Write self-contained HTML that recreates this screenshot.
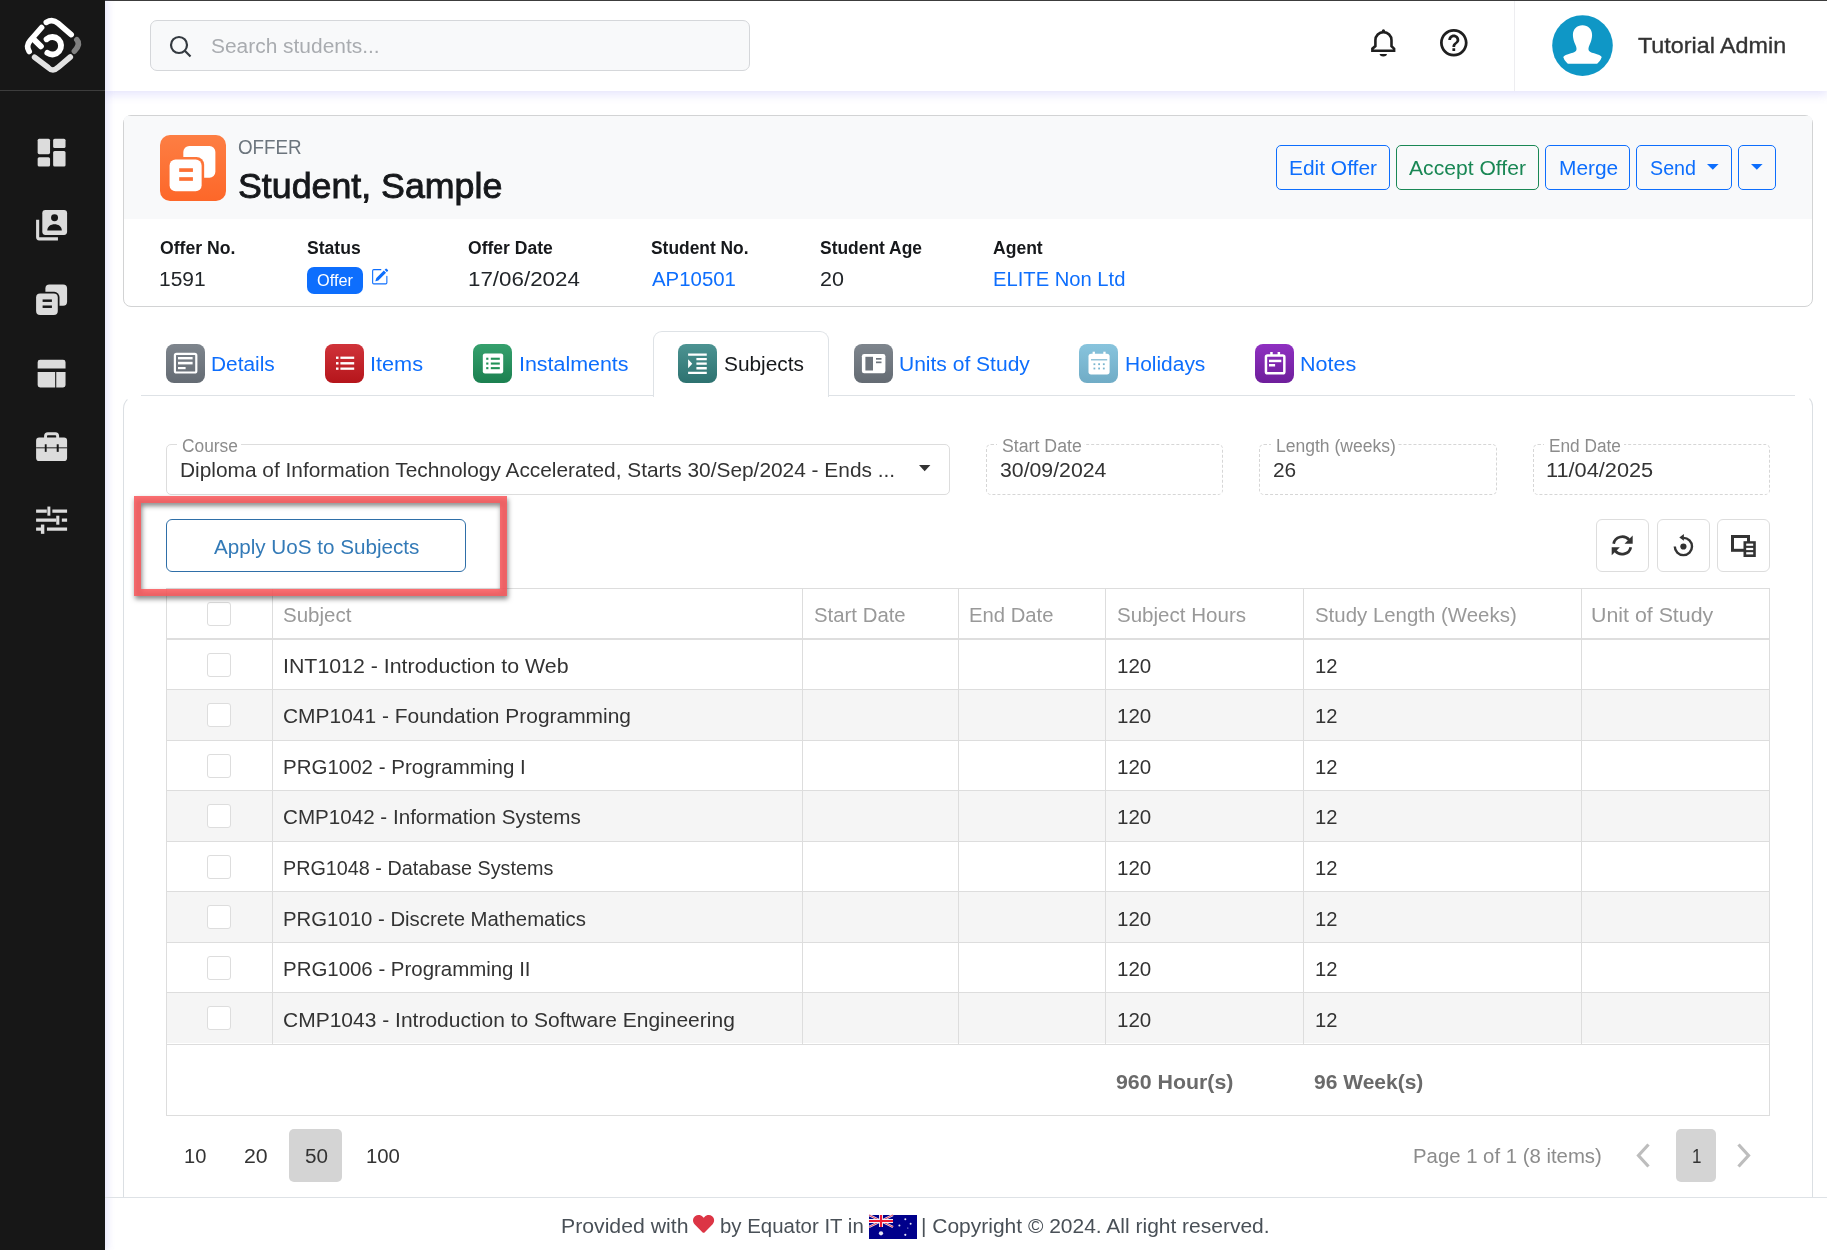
<!DOCTYPE html>
<html lang="en">
<head>
<meta charset="utf-8">
<title>Offer - Student, Sample</title>
<style>
*{box-sizing:border-box;margin:0;padding:0}
html,body{width:1827px;height:1250px;overflow:hidden;background:#fff}
body{font-family:"Liberation Sans",sans-serif;color:#212529;position:relative}
.abs{position:absolute}
svg{position:absolute;overflow:visible}
.t{position:absolute;white-space:nowrap;line-height:1;transform-origin:0 50%}
#side{position:absolute;left:0;top:0;width:105px;height:1250px;background:#171717;box-shadow:2px 0 7px 1px rgba(115,105,235,.16)}
#sdiv{position:absolute;left:0;top:90px;width:105px;height:1px;background:#3d3d3d}
#top{position:absolute;left:105px;top:0;width:1722px;height:91px;background:#fff;box-shadow:0 3px 9px 1px rgba(115,105,235,.17)}
#topline{position:absolute;left:0;top:0;width:1827px;height:1px;background:#3c3c3c}
#search{position:absolute;left:150px;top:20px;width:600px;height:51px;border:1px solid #d5d7da;border-radius:7px;background:#f8f9fa}
#vdiv{position:absolute;left:1514px;top:1px;width:1px;height:90px;background:#ededf0}
#card{position:absolute;left:123px;top:115px;width:1690px;height:192px;border:1px solid #d2d3d4;border-radius:8px;background:#fff}
#cardhd{position:absolute;left:0;top:0;width:100%;height:103px;background:#f8f9fa;border-radius:4px 4px 0 0}
#oicon{position:absolute;left:160px;top:135px;width:66px;height:66px;border-radius:10px;background:linear-gradient(#fd7e43,#fd6729)}
.btn{position:absolute;top:145px;height:45px;border:1px solid #0d6efd;border-radius:5px}
.btn.g{border-color:#198754}
#badge{position:absolute;left:307px;top:267px;width:56px;height:27px;border-radius:7px;background:#0d6efd}
.tabi{position:absolute;top:344px;width:39px;height:39px;border-radius:8px}
#tabline{position:absolute;left:141px;top:395px;width:1654px;height:1px;background:#dee2e6}
#tabact{position:absolute;left:653px;top:331px;width:176px;height:66px;border:1px solid #dee2e6;border-bottom:none;border-radius:9px 9px 0 0;background:#fff}
#panel{position:absolute;left:123px;top:395px;width:1690px;height:803px;border:1px solid #dbdfe3;border-top-color:transparent;border-bottom:none;border-radius:14px 11px 0 0}
.fld{position:absolute;top:444px;height:51px;border:1px solid #ddd;border-radius:5px;background:#fff}
.fld.ro{border-style:dashed;border-color:#d6d6d6}
.fl{font-size:17px;color:#8c8c8c;background:#fff;padding:0 5px;height:16px;line-height:16px}
#grid{position:absolute;left:166px;top:588px;width:1604px;height:528px;border:1px solid #ddd;background:#fff}
.hl{left:167px;width:1602px;height:1px;background:#ddd}
.vl{position:absolute;top:589px;width:1px;height:455px;background:#ddd}
.cb{position:absolute;left:207px;width:24px;height:24px;border:1px solid #ddd;border-radius:3px;background:#fff}
.tb{position:absolute;top:519px;width:53px;height:53px;border:1px solid #ddd;border-radius:6px;background:#fff}
#anno{position:absolute;left:134px;top:496px;width:373px;height:100px;border:7px solid rgba(250,88,92,.86);filter:drop-shadow(1px 3px 2.5px rgba(0,0,0,.55))}
</style>
</head>
<body>
<div id="top"></div>
<div id="topline"></div>
<div id="side"><div id="sdiv"></div>
<svg style="left:0px;top:0px" width="105" height="90" viewBox="0 0 105 90" ><g fill="none" stroke-linecap="round" stroke-linejoin="round" stroke-width="5.6"><path d="M46.3 22.4 Q52.5 18.4 58.2 23.4 L71.2 34.6" stroke="#fff"/><path d="M41.6 27.5 L30.2 40.5 Q25.6 46 29.2 51.5" stroke="#fff"/><path d="M33.7 39.4 L40.9 46.3" stroke="#fff" stroke-width="5.9"/><path d="M46.6 39.2 A8.7 8.7 0 1 1 47.4 52.9" stroke="#fff" stroke-width="5.9"/><path d="M34.6 57.3 L48.2 67.6 Q52.9 72.4 57.8 67.6 L70.3 57" stroke="#e2e2e2"/><path d="M76.8 39.7 Q81 44.2 74.4 51.2" stroke="#808080"/></g></svg>
<svg style="left:33.2px;top:133.5px" width="37.2" height="37.2" viewBox="0 0 24 24" ><g fill="#dcdcdc"><rect x="3" y="3" width="8" height="10" rx="1"/><rect x="3" y="15" width="8" height="6" rx="1"/><rect x="13" y="3" width="8" height="6" rx="1"/><rect x="13" y="11" width="8" height="10" rx="1"/></g></svg>
<svg style="left:33.2px;top:207.0px" width="37.2" height="37.2" viewBox="0 0 24 24" ><defs><mask id="mk0"><rect x="0" y="0" width="24" height="24" fill="#fff"/><circle cx="13.9" cy="6.9" r="2.25" fill="#000"/><path d="M9.2 15.1c0-2.700 2.400-4 4.700-4s4.700 1.300 4.700 4z" fill="#000"/></mask></defs><rect x="6" y="2" width="16" height="16" rx="2" fill="#dcdcdc" mask="url(#mk0)"/><path fill="#dcdcdc" d="M2 8.200h2v11.400h12.100v2H4a2 2 0 0 1-2-2z"/></svg>
<svg style="left:33.2px;top:280.5px" width="37.2" height="37.2" viewBox="0 0 24 24" ><defs><mask id="mk1"><rect x="0" y="0" width="24" height="24" fill="#fff"/><rect x="0.9" y="7" width="16.2" height="16" rx="3.4" fill="#000"/></mask></defs><rect x="8" y="2.2" width="14" height="13.8" rx="2.6" fill="#dcdcdc" mask="url(#mk1)"/><rect x="2" y="8.1" width="14" height="13.8" rx="2.6" fill="#dcdcdc"/><rect x="6.2" y="11.9" width="6" height="1.6" fill="#171717"/><rect x="6.2" y="15.8" width="6" height="1.6" fill="#171717"/></svg>
<svg style="left:33.2px;top:354.6px" width="37.2" height="37.2" viewBox="0 0 24 24" ><g fill="#dcdcdc"><path d="M4.6 3h14.8A1.6 1.6 0 0 1 21 4.6V8.7H3V4.6A1.6 1.6 0 0 1 4.6 3z"/><path d="M3 11h11.3v10H4.6A1.6 1.6 0 0 1 3 19.4z"/><path d="M15 11h6v8.4a1.6 1.6 0 0 1-1.6 1.6H15z"/></g></svg>
<svg style="left:33.2px;top:427.7px" width="37.2" height="37.2" viewBox="0 0 24 24" ><defs><mask id="mk3"><rect x="0" y="0" width="24" height="24" fill="#fff"/><rect x="2" y="12.500" width="20" height="0.600" fill="#000"/><rect x="7.600" y="10.500" width="1.200" height="4.900" fill="#000"/><rect x="15.300" y="10.500" width="1.300" height="4.900" fill="#000"/></mask></defs><path fill="none" stroke="#dcdcdc" stroke-width="1.900" d="M8.100 7V5.200a1.500 1.500 0 0 1 1.500-1.500h4.800a1.500 1.500 0 0 1 1.500 1.500V7"/><rect x="2" y="6.200" width="20" height="15.100" rx="2" fill="#dcdcdc" mask="url(#mk3)"/></svg>
<svg style="left:33.2px;top:502.8px" width="37.2" height="37.2" viewBox="0 0 24 24" ><g fill="#dcdcdc"><rect x="2" y="4.2" width="6.9" height="2.1"/><rect x="9.3" y="2.3" width="1.9" height="5.9"/><rect x="12.5" y="4.2" width="9.5" height="2.1"/><rect x="2" y="10" width="13" height="2.1"/><rect x="15" y="8.2" width="2" height="5.8"/><rect x="18.6" y="10" width="3.4" height="2.1"/><rect x="2" y="15.8" width="3.2" height="2.1"/><rect x="5.1" y="13.9" width="2.2" height="6"/><rect x="9" y="15.8" width="13" height="2.1"/></g></svg>
</div>
<div id="search"></div>
<svg style="left:168px;top:34px" width="26" height="26" viewBox="0 0 26 26" ><g fill="none" stroke="#343a40" stroke-width="2.2" stroke-linecap="butt"><circle cx="11" cy="11" r="8"/><path d="M16.8 16.8 L22.5 22.5"/></g></svg>
<svg style="left:1370.8px;top:28.7px" width="24.8" height="27.4" viewBox="0 0 24.8 27.4" ><path fill="none" stroke="#1f1f1f" stroke-width="2.600" stroke-linejoin="miter" d="M4.400 11.200A8.050 8.050 0 0 1 20.500 11.200V17.100L23.100 19.700V21.800H1.400V19.700L4.400 17.100z"/><circle cx="12.450" cy="1.800" r="1.600" fill="#1f1f1f"/><path fill="#1f1f1f" d="M8.650 25.100h7.300a3.650 2.400 0 0 1-7.300 0z"/></svg>
<svg style="left:1440.3px;top:28.6px" width="27.6" height="27.6" viewBox="2 2 20 20" ><path fill="#1f1f1f" d="M11 18h2v-2h-2v2zm1-16C6.48 2 2 6.48 2 12s4.48 10 10 10 10-4.48 10-10S17.52 2 12 2zm0 18c-4.41 0-8-3.59-8-8s3.59-8 8-8 8 3.59 8 8-3.59 8-8 8zm0-14c-2.21 0-4 1.79-4 4h2c0-1.1.9-2 2-2s2 .9 2 2c0 2-3 1.75-3 5h2c0-2.25 3-2.5 3-5 0-2.21-1.79-4-4-4z"/></svg>
<svg style="left:1552px;top:15px" width="61" height="61" viewBox="0 0 61 61" ><circle cx="30.5" cy="30.6" r="30.3" fill="#0f97c6"/><path fill="#fff" d="M30.5 10.3C36.1 10.3 40.1 14.3 40.1 19.9C40.1 23.4 38.9 26.9 37.5 29.9C36.6 31.9 36.1 34.0 36.8 35.4C37.4 36.6 38.9 37.4 42.1 38.3C46.3 39.5 49.0 40.6 49.7 42.1C49.7 42.1 49.1 44.4 47.7 46.1C46.5 47.5 45.1 48.8 45.1 48.8H15.9C15.9 48.8 14.5 47.5 13.3 46.1C11.9 44.4 11.3 42.1 11.3 42.1C12.0 40.6 14.7 39.5 18.9 38.3C22.1 37.4 23.6 36.6 24.2 35.4C24.9 34.0 24.4 31.9 23.5 29.9C22.1 26.9 20.9 23.4 20.9 19.9C20.9 14.3 24.9 10.3 30.5 10.3z"/></svg>
<div id="vdiv"></div>

<div id="card"><div id="cardhd"></div></div>
<div id="oicon"></div>
<svg style="left:165.42px;top:140.56px" width="54.96" height="54.96" viewBox="0 0 24 24" ><defs><mask id="mk2"><rect x="0" y="0" width="24" height="24" fill="#fff"/><rect x="0.9" y="7" width="16.2" height="16" rx="3.4" fill="#000"/></mask></defs><rect x="8" y="2.2" width="14" height="13.8" rx="2.6" fill="#fff" mask="url(#mk2)"/><rect x="2" y="8.1" width="14" height="13.8" rx="2.6" fill="#fff"/><rect x="6.2" y="11.9" width="6" height="1.6" fill="#fd7034"/><rect x="6.2" y="15.8" width="6" height="1.6" fill="#fd7034"/></svg><svg style="left:1707px;top:164.2px" width="11.6" height="5.8" viewBox="0 0 10 5" ><path fill="#0d6efd" d="M0 0h10L5 5z"/></svg><svg style="left:1751.1px;top:164.2px" width="11.6" height="5.8" viewBox="0 0 10 5" ><path fill="#0d6efd" d="M0 0h10L5 5z"/></svg><svg style="left:371px;top:267.5px" width="17.5" height="17.5" viewBox="0 0 16 16" ><g fill="#0d6efd"><path d="M15.502 1.94a.5.5 0 0 1 0 .706L14.459 3.69l-2-2L13.502.646a.5.5 0 0 1 .707 0l1.293 1.293zm-1.75 2.456-2-2L4.939 9.21a.5.5 0 0 0-.121.196l-.805 2.414a.25.25 0 0 0 .316.316l2.414-.805a.5.5 0 0 0 .196-.12l6.813-6.814z"/><path fill-rule="evenodd" d="M1 13.500A1.500 1.500 0 0 0 2.500 15h11a1.500 1.500 0 0 0 1.500-1.500v-6a.5.5 0 0 0-1 0v6a.5.5 0 0 1-.5.5h-11a.5.5 0 0 1-.5-.5v-11a.5.5 0 0 1 .5-.5H9a.5.5 0 0 0 0-1H2.500A1.500 1.500 0 0 0 1 2.500z"/></g></svg>
<div class="btn" style="left:1276px;width:114px"></div>
<div class="btn g" style="left:1396px;width:143px"></div>
<div class="btn" style="left:1545px;width:85px"></div>
<div class="btn" style="left:1636px;width:96px"></div>
<div class="btn" style="left:1738px;width:38px"></div>
<div id="badge"></div>

<div id="panel"></div>
<div id="tabline"></div>
<div id="tabact"></div>
<div class="tabi" style="left:166px;background:linear-gradient(#7e858d,#646b73)"></div>
<div class="tabi" style="left:325px;background:linear-gradient(#d0333a,#b5151b)"></div>
<div class="tabi" style="left:473px;background:linear-gradient(#35a06d,#1b8050)"></div>
<div class="tabi" style="left:678px;background:linear-gradient(#4c9392,#2d7270)"></div>
<div class="tabi" style="left:854px;background:linear-gradient(#7e858d,#646b73)"></div>
<div class="tabi" style="left:1079px;background:linear-gradient(#88c4dd,#70acc6)"></div>
<div class="tabi" style="left:1255px;background:linear-gradient(#8f30c1,#6e1e9b)"></div>
<svg style="left:166px;top:344px" width="39" height="39" viewBox="0 0 39 39" ><rect x="8.9" y="9.9" width="21.4" height="18.6" rx="1.6" fill="none" stroke="#fff" stroke-width="2.2"/><g fill="#fff"><rect x="12" y="13" width="14.6" height="2.4"/><rect x="12" y="17.8" width="14.6" height="2.6"/><rect x="12" y="23" width="7.6" height="2.2"/></g></svg>
<svg style="left:325px;top:344px" width="39" height="39" viewBox="0 0 39 39" ><g fill="#fff"><rect x="11" y="12.6" width="2.5" height="2.3"/><rect x="15.4" y="12.6" width="13.8" height="2.3"/><rect x="11" y="18.1" width="2.5" height="2.4"/><rect x="15.4" y="18.1" width="13.8" height="2.4"/><rect x="11" y="23.5" width="2.500" height="2.3"/><rect x="15.400" y="23.500" width="13.800" height="2.300"/></g></svg>
<svg style="left:473px;top:344px" width="39" height="39" viewBox="0 0 39 39" ><rect x="9.800" y="9.400" width="20.400" height="20.100" rx="2.200" fill="#fff"/><g fill="#229257"><rect x="13.200" y="13.700" width="2.200" height="2.100"/><rect x="17.800" y="13.700" width="9" height="2.100"/><rect x="13.200" y="18.500" width="2.200" height="2.100"/><rect x="17.800" y="18.500" width="9" height="2.100"/><rect x="13.200" y="23.100" width="2.200" height="2.100"/><rect x="17.800" y="23.100" width="9" height="2.100"/></g></svg>
<svg style="left:685.3px;top:350.3px" width="24.9" height="27.4" viewBox="0 0 24 24" preserveAspectRatio="none"><path fill="#fff" d="M3 21h18v-2H3v2zM3 8v8l4-4-4-4zm8 9h10v-2H11v2zM3 3v2h18V3H3zm8 6h10V7H11v2zm0 4h10v-2H11v2z"/></svg>
<svg style="left:854px;top:344px" width="39" height="39" viewBox="0 0 39 39" ><rect x="7.900" y="10" width="23.500" height="19.300" rx="2.200" fill="#fff"/><g fill="#6d747c"><rect x="11.400" y="12.800" width="7.600" height="13.700"/><rect x="22" y="14" width="5.500" height="1.700"/><rect x="22" y="17.500" width="5.500" height="1.700"/></g></svg>
<svg style="left:1079px;top:344px" width="39" height="39" viewBox="0 0 39 39" ><g fill="#fff"><rect x="9.500" y="9.700" width="21.100" height="20.700" rx="2.600"/><rect x="13.600" y="7.700" width="2.300" height="4"/><rect x="24.300" y="7.700" width="2.300" height="4"/></g><g fill="#79b5cf"><rect x="12" y="15.200" width="16.200" height="1.200"/><rect x="14.500" y="19.300" width="1.800" height="1.800"/><rect x="19.200" y="19.300" width="1.800" height="1.800"/><rect x="23.900" y="19.300" width="1.800" height="1.800"/><rect x="14.500" y="23.600" width="1.800" height="1.800"/><rect x="19.200" y="23.600" width="1.800" height="1.800"/><rect x="23.900" y="23.600" width="1.800" height="1.800"/></g></svg>
<svg style="left:1255px;top:344px" width="39" height="39" viewBox="0 0 39 39" ><rect x="10.950" y="11.450" width="18.400" height="17.800" rx="1.600" fill="none" stroke="#fff" stroke-width="2.500"/><g fill="#fff"><rect x="15.200" y="8" width="2.500" height="3"/><rect x="22.600" y="8" width="2.500" height="3"/><rect x="14" y="15.700" width="12.300" height="2.500"/><rect x="14" y="20" width="6.100" height="2.500"/></g></svg>

<div class="fld" style="left:166px;width:784px"></div>
<div class="fld ro" style="left:986px;width:237px"></div>
<div class="fld ro" style="left:1259px;width:238px"></div>
<div class="fld ro" style="left:1533px;width:237px"></div>
<div class="abs" style="left:177.0px;top:439px;width:64.0px;height:8px;background:#fff"></div>
<div class="t" style="left:182.0px;top:436.8px;font-size:18px;color:#8c8c8c;transform:scaleX(0.9643)">Course</div>
<div class="abs" style="left:996.6px;top:439px;width:87.8px;height:8px;background:#fff"></div>
<div class="t" style="left:1001.6px;top:436.8px;font-size:18px;color:#8c8c8c;transform:scaleX(0.9848)">Start Date</div>
<div class="abs" style="left:1270.5px;top:439px;width:127.8px;height:8px;background:#fff"></div>
<div class="t" style="left:1275.5px;top:436.8px;font-size:18px;color:#8c8c8c;transform:scaleX(0.9736)">Length (weeks)</div>
<div class="abs" style="left:1544.0px;top:439px;width:80.0px;height:8px;background:#fff"></div>
<div class="t" style="left:1549.0px;top:436.8px;font-size:18px;color:#8c8c8c;transform:scaleX(0.9589)">End Date</div>

<div class="abs" style="left:166px;top:519px;width:300px;height:53px;border:1px solid #2f6fa8;border-radius:6px;background:#fff"></div>
<div class="tb" style="left:1596px"></div>
<div class="tb" style="left:1657px"></div>
<div class="tb" style="left:1717px"></div>
<svg style="left:1611.3px;top:534.6px" width="22.4" height="20.8" viewBox="0 0 22 20" ><g fill="none" stroke="#333" stroke-width="2.700"><path d="M2.600 8.300A8.600 8.300 0 0 1 17.800 4.600"/><path d="M19.400 11.700A8.600 8.300 0 0 1 4.200 15.400"/></g><g fill="#333"><path d="M21.300 0.300V8.300H13.300z"/><path d="M0.700 19.700V11.700H8.700z"/></g></svg>
<svg style="left:1672.5px;top:534px" width="21" height="22.5" viewBox="0 0 21 22.500" ><path fill="none" stroke="#333" stroke-width="2.400" d="M10.400 3.900A8.600 8.600 0 1 1 1.800 12.500"/><path fill="#333" d="M10.900 0V6.800L6.300 3.400z"/><circle cx="10.400" cy="12.500" r="3.100" fill="#333"/></svg>
<svg style="left:1731px;top:534.6px" width="25.5" height="22.8" viewBox="0 0 25.500 22.800" ><rect x="1.500" y="1.500" width="16" height="13.800" fill="none" stroke="#333" stroke-width="3"/><rect x="12.500" y="6.200" width="12.300" height="15.800" fill="#333"/><g fill="#fff"><rect x="15.200" y="8.600" width="7" height="2.200"/><rect x="15.200" y="12.900" width="7" height="2.200"/><rect x="15.200" y="17.200" width="7" height="2.200"/></g></svg><svg style="left:918.9px;top:465.4px" width="11.4" height="6.2" viewBox="0 0 10 5" preserveAspectRatio="none"><path fill="#333" d="M0 0h10L5 5z"/></svg>

<div id="grid"></div>
<div class="cb" style="top:602px"></div>
<div class="abs hl" style="top:638px;height:2px;background:#dedede"></div>
<div class="abs hl" style="top:689px"></div>
<div class="cb" style="top:653px"></div>
<div class="abs" style="left:167px;top:690px;width:1602px;height:50px;background:#f5f5f5"></div>
<div class="abs hl" style="top:740px"></div>
<div class="cb" style="top:703px"></div>
<div class="abs hl" style="top:790px"></div>
<div class="cb" style="top:754px"></div>
<div class="abs" style="left:167px;top:791px;width:1602px;height:50px;background:#f5f5f5"></div>
<div class="abs hl" style="top:841px"></div>
<div class="cb" style="top:804px"></div>
<div class="abs hl" style="top:891px"></div>
<div class="cb" style="top:855px"></div>
<div class="abs" style="left:167px;top:892px;width:1602px;height:50px;background:#f5f5f5"></div>
<div class="abs hl" style="top:942px"></div>
<div class="cb" style="top:905px"></div>
<div class="abs hl" style="top:992px"></div>
<div class="cb" style="top:956px"></div>
<div class="abs" style="left:167px;top:993px;width:1602px;height:50px;background:#f5f5f5"></div>
<div class="abs hl" style="top:1044px"></div>
<div class="cb" style="top:1006px"></div>
<div class="vl" style="left:272px"></div>
<div class="vl" style="left:802px"></div>
<div class="vl" style="left:958px"></div>
<div class="vl" style="left:1105px"></div>
<div class="vl" style="left:1303px"></div>
<div class="vl" style="left:1581px"></div>

<div class="abs" style="left:289px;top:1129px;width:53px;height:53px;border-radius:5px;background:#d4d4d4"></div>
<div class="abs" style="left:1676px;top:1129px;width:40px;height:53px;border-radius:5px;background:#d4d4d4"></div>
<svg style="left:1636px;top:1143px" width="14" height="25" viewBox="0 0 14 25" ><path fill="none" stroke="#bdbdbd" stroke-width="3.2" d="M12.500 1.500L2.500 12.500L12.500 23.500"/></svg><svg style="left:1737px;top:1143px" width="14" height="25" viewBox="0 0 14 25" ><path fill="none" stroke="#bdbdbd" stroke-width="3.2" d="M1.500 1.500L11.500 12.500L1.500 23.500"/></svg>
<div class="abs" style="left:105px;top:1197px;width:1722px;height:1px;background:#dee2e6"></div>
<svg style="left:693.3px;top:1215.3px" width="21.4" height="19.9" viewBox="0 0 512 480" preserveAspectRatio="none"><path fill="#dc3545" d="M47.600 32.500c-61.900 52.700-58.600 138.800-10.600 188.300l193.500 199.800c12.500 12.900 33.400 12.900 45.900 0l193.500-199.800c48-49.500 51.300-135.600-10.600-188.300-54-46-134.400-37.700-183.900 13.400L256 66.200l-19.400-20.300C187.100-5.200 106.600-13.500 47.600 32.500z"/></svg><svg style="left:868.8px;top:1214.7px" width="48" height="24" viewBox="0 0 48 24" ><rect width="48" height="24" fill="#00008b"/><g stroke="#e9e9f6" stroke-width="2.400"><path d="M0 0L24 12M24 0L0 12"/></g><g stroke="#e0263c" stroke-width="0.900"><path d="M0 0L24 12M24 0L0 12"/></g><path d="M12 0V12M0 6H24" stroke="#f4f4fb" stroke-width="4"/><path d="M12 0V12M0 6H24" stroke="#ee1c34" stroke-width="2.200"/><g fill="#e4e4f5"><circle cx="12" cy="18.300" r="2.100"/><circle cx="36.300" cy="4.300" r="1"/><circle cx="30.400" cy="10.600" r="1"/><circle cx="41.600" cy="8.800" r="1"/><circle cx="36.300" cy="19.800" r="1.100"/><circle cx="38.800" cy="13" r="0.600"/></g></svg>

<div class="t" style="left:210.7px;top:36.1px;font-size:20px;color:#a9acb0;transform:scaleX(1.0459);">Search students...</div>
<div class="t" style="left:1637.5px;top:34.8px;font-size:22.5px;color:#333;transform:scaleX(1.0359);-webkit-text-stroke:0.35px #333;">Tutorial Admin</div>
<div class="t" style="left:237.6px;top:136.9px;font-size:20px;color:#6c757d;transform:scaleX(0.9394);">OFFER</div>
<div class="t" style="left:237.5px;top:168.0px;font-size:35px;color:#16181b;transform:scaleX(1.0214);-webkit-text-stroke:0.9px #16181b;">Student, Sample</div>
<div class="t" style="left:159.6px;top:240.4px;font-size:17.5px;color:#16181b;transform:scaleX(1.0082);font-weight:bold;">Offer No.</div>
<div class="t" style="left:306.8px;top:240.4px;font-size:17.5px;color:#16181b;transform:scaleX(1.0038);font-weight:bold;">Status</div>
<div class="t" style="left:467.8px;top:240.4px;font-size:17.5px;color:#16181b;transform:scaleX(1.0024);font-weight:bold;">Offer Date</div>
<div class="t" style="left:650.6px;top:240.4px;font-size:17.5px;color:#16181b;transform:scaleX(0.9937);font-weight:bold;">Student No.</div>
<div class="t" style="left:819.7px;top:240.4px;font-size:17.5px;color:#16181b;transform:scaleX(0.9960);font-weight:bold;">Student Age</div>
<div class="t" style="left:992.9px;top:240.4px;font-size:17.5px;color:#16181b;transform:scaleX(1.0021);font-weight:bold;">Agent</div>
<div class="t" style="left:159.3px;top:269.1px;font-size:20px;color:#212529;transform:scaleX(1.0476);">1591</div>
<div class="t" style="left:467.8px;top:269.1px;font-size:20px;color:#212529;transform:scaleX(1.1173);">17/06/2024</div>
<div class="t" style="left:651.8px;top:269.1px;font-size:20px;color:#0d6efd;transform:scaleX(1.0195);">AP10501</div>
<div class="t" style="left:819.8px;top:269.1px;font-size:20px;color:#212529;transform:scaleX(1.0750);">20</div>
<div class="t" style="left:993.0px;top:269.1px;font-size:20px;color:#0d6efd;transform:scaleX(1.0094);">ELITE Non Ltd</div>
<div class="t" style="left:317.0px;top:272.7px;font-size:16px;color:#fff;transform:scaleX(1.0176);">Offer</div>
<div class="t" style="left:1289.1px;top:158.1px;font-size:20px;color:#0d6efd;transform:scaleX(1.0463);">Edit Offer</div>
<div class="t" style="left:1409.3px;top:158.1px;font-size:20px;color:#198754;transform:scaleX(1.0559);">Accept Offer</div>
<div class="t" style="left:1558.5px;top:158.1px;font-size:20px;color:#0d6efd;transform:scaleX(1.0444);">Merge</div>
<div class="t" style="left:1649.7px;top:158.1px;font-size:20px;color:#0d6efd;transform:scaleX(0.9841);">Send</div>
<div class="t" style="left:211.3px;top:354.4px;font-size:20px;color:#0d6efd;transform:scaleX(1.0424);">Details</div>
<div class="t" style="left:370.2px;top:354.4px;font-size:20px;color:#0d6efd;transform:scaleX(1.0848);">Items</div>
<div class="t" style="left:518.8px;top:354.4px;font-size:20px;color:#0d6efd;transform:scaleX(1.0710);">Instalments</div>
<div class="t" style="left:724.0px;top:354.4px;font-size:20px;color:#16181b;transform:scaleX(1.0427);">Subjects</div>
<div class="t" style="left:899.3px;top:354.4px;font-size:20px;color:#0d6efd;transform:scaleX(1.0508);">Units of Study</div>
<div class="t" style="left:1125.2px;top:354.4px;font-size:20px;color:#0d6efd;transform:scaleX(1.0473);">Holidays</div>
<div class="t" style="left:1300.2px;top:354.4px;font-size:20px;color:#0d6efd;transform:scaleX(1.0760);">Notes</div>
<div class="t" style="left:180.1px;top:459.5px;font-size:20.7px;color:#333;transform:scaleX(1.0084);">Diploma of Information Technology Accelerated, Starts 30/Sep/2024 - Ends ...</div>
<div class="t" style="left:1000.0px;top:459.5px;font-size:20.7px;color:#333;transform:scaleX(1.0275);">30/09/2024</div>
<div class="t" style="left:1273.2px;top:459.5px;font-size:20.7px;color:#333;transform:scaleX(1.0095);">26</div>
<div class="t" style="left:1546.1px;top:459.5px;font-size:20.7px;color:#333;transform:scaleX(1.0505);">11/04/2025</div>
<div class="t" style="left:213.9px;top:537.8px;font-size:19.9px;color:#337ab7;transform:scaleX(1.0376);">Apply UoS to Subjects</div>
<div class="t" style="left:283.3px;top:605.8px;font-size:19.9px;color:#999;transform:scaleX(1.0308);">Subject</div>
<div class="t" style="left:813.5px;top:605.8px;font-size:19.9px;color:#999;transform:scaleX(1.0239);">Start Date</div>
<div class="t" style="left:969.4px;top:605.8px;font-size:19.9px;color:#999;transform:scaleX(1.0188);">End Date</div>
<div class="t" style="left:1117.3px;top:605.8px;font-size:19.9px;color:#999;transform:scaleX(1.0325);">Subject Hours</div>
<div class="t" style="left:1314.5px;top:605.8px;font-size:19.9px;color:#999;transform:scaleX(1.0268);">Study Length (Weeks)</div>
<div class="t" style="left:1591.4px;top:605.8px;font-size:19.9px;color:#999;transform:scaleX(1.0732);">Unit of Study</div>
<div class="t" style="left:283.3px;top:656.6px;font-size:19.9px;color:#333;transform:scaleX(1.0730);">INT1012 - Introduction to Web</div>
<div class="t" style="left:1117.2px;top:656.6px;font-size:19.9px;color:#333;transform:scaleX(1.0323);">120</div>
<div class="t" style="left:1315.0px;top:656.6px;font-size:19.9px;color:#333;transform:scaleX(1.0150);">12</div>
<div class="t" style="left:283.1px;top:707.2px;font-size:19.9px;color:#333;transform:scaleX(1.0527);">CMP1041 - Foundation Programming</div>
<div class="t" style="left:1117.2px;top:707.2px;font-size:19.9px;color:#333;transform:scaleX(1.0323);">120</div>
<div class="t" style="left:1315.0px;top:707.2px;font-size:19.9px;color:#333;transform:scaleX(1.0150);">12</div>
<div class="t" style="left:283.3px;top:757.8px;font-size:19.9px;color:#333;transform:scaleX(1.0306);">PRG1002 - Programming I</div>
<div class="t" style="left:1117.2px;top:757.8px;font-size:19.9px;color:#333;transform:scaleX(1.0323);">120</div>
<div class="t" style="left:1315.0px;top:757.8px;font-size:19.9px;color:#333;transform:scaleX(1.0150);">12</div>
<div class="t" style="left:283.2px;top:808.4px;font-size:19.9px;color:#333;transform:scaleX(1.0360);">CMP1042 - Information Systems</div>
<div class="t" style="left:1117.2px;top:808.4px;font-size:19.9px;color:#333;transform:scaleX(1.0323);">120</div>
<div class="t" style="left:1315.0px;top:808.4px;font-size:19.9px;color:#333;transform:scaleX(1.0150);">12</div>
<div class="t" style="left:283.4px;top:859.1px;font-size:19.9px;color:#333;transform:scaleX(0.9941);">PRG1048 - Database Systems</div>
<div class="t" style="left:1117.2px;top:859.1px;font-size:19.9px;color:#333;transform:scaleX(1.0323);">120</div>
<div class="t" style="left:1315.0px;top:859.1px;font-size:19.9px;color:#333;transform:scaleX(1.0150);">12</div>
<div class="t" style="left:283.4px;top:909.7px;font-size:19.9px;color:#333;transform:scaleX(1.0224);">PRG1010 - Discrete Mathematics</div>
<div class="t" style="left:1117.2px;top:909.7px;font-size:19.9px;color:#333;transform:scaleX(1.0323);">120</div>
<div class="t" style="left:1315.0px;top:909.7px;font-size:19.9px;color:#333;transform:scaleX(1.0150);">12</div>
<div class="t" style="left:283.3px;top:960.3px;font-size:19.9px;color:#333;transform:scaleX(1.0270);">PRG1006 - Programming II</div>
<div class="t" style="left:1117.2px;top:960.3px;font-size:19.9px;color:#333;transform:scaleX(1.0323);">120</div>
<div class="t" style="left:1315.0px;top:960.3px;font-size:19.9px;color:#333;transform:scaleX(1.0150);">12</div>
<div class="t" style="left:283.1px;top:1011.0px;font-size:19.9px;color:#333;transform:scaleX(1.0559);">CMP1043 - Introduction to Software Engineering</div>
<div class="t" style="left:1117.2px;top:1011.0px;font-size:19.9px;color:#333;transform:scaleX(1.0323);">120</div>
<div class="t" style="left:1315.0px;top:1011.0px;font-size:19.9px;color:#333;transform:scaleX(1.0150);">12</div>
<div class="t" style="left:1115.9px;top:1072.7px;font-size:19.9px;color:#6a6a6a;transform:scaleX(1.0729);font-weight:bold;">960 Hour(s)</div>
<div class="t" style="left:1313.7px;top:1072.7px;font-size:19.9px;color:#6a6a6a;transform:scaleX(1.0559);font-weight:bold;">96 Week(s)</div>
<div class="t" style="left:184.2px;top:1147.4px;font-size:19.9px;color:#333;transform:scaleX(1.0100);">10</div>
<div class="t" style="left:243.7px;top:1147.4px;font-size:19.9px;color:#333;transform:scaleX(1.0700);">20</div>
<div class="t" style="left:304.9px;top:1147.4px;font-size:19.9px;color:#333;transform:scaleX(1.0400);">50</div>
<div class="t" style="left:366.2px;top:1147.4px;font-size:19.9px;color:#333;transform:scaleX(1.0226);">100</div>
<div class="t" style="left:1413.4px;top:1147.4px;font-size:19.9px;color:#8c8c8c;transform:scaleX(1.0225);">Page 1 of 1 (8 items)</div>
<div class="t" style="left:1691.7px;top:1147.4px;font-size:19.9px;color:#333;transform:scaleX(0.8556);">1</div>
<div class="t" style="left:561.0px;top:1216.0px;font-size:20px;color:#495057;transform:scaleX(1.0615);">Provided with</div>
<div class="t" style="left:719.8px;top:1216.0px;font-size:20px;color:#495057;transform:scaleX(1.0209);">by Equator IT in</div>
<div class="t" style="left:921.0px;top:1216.0px;font-size:20px;color:#495057;transform:scaleX(1.0489);">| Copyright © 2024. All right reserved.</div>
<div id="anno"></div>
</body>
</html>
